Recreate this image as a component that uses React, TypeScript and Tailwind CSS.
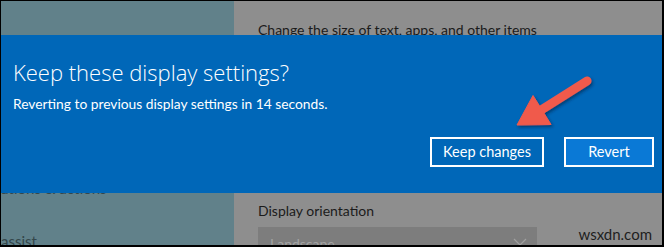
import React from "react";

const body = { fontFamily: 'Lato, "Open Sans", sans-serif' };
const heading = { fontFamily: '"Open Sans", "Noto Sans", sans-serif' };

function Arrow() {
  return (
    <svg className="pointer-events-none absolute left-0 top-0" width="664" height="247" viewBox="-1 -1 664 247">
      <defs>
        <filter id="sh" x="-20%" y="-20%" width="140%" height="140%">
          <feDropShadow dx="1.5" dy="2" stdDeviation="1.5" floodColor="#002040" floodOpacity="0.55" />
        </filter>
      </defs>
      <g filter="url(#sh)" fill="#f05a4c" stroke="#f05a4c">
        <line x1="585" y1="79" x2="536" y2="110" strokeWidth="9" strokeLinecap="round" />
        <polygon points="515,123 531,93.5 549,122.5" strokeWidth="1" strokeLinejoin="round" />
      </g>
    </svg>
  );
}

export default function App() {
  return (
    <div
      className="relative h-[247px] w-[664px] overflow-hidden border-t border-l border-r-2 border-b-2 border-black"
      style={body}
    >
      <div className="flex h-full">
        <aside className="flex w-[233px] flex-col bg-[#61818a] text-[15px] leading-5 text-[#34474b]">
          <div className="h-[6px] w-[217px] bg-[#4f666b]" />
          <div className="mt-[177px] whitespace-nowrap">ations &amp; actions</div>
          <div className="mt-[33px] whitespace-nowrap">assist</div>
        </aside>
        <main className="flex flex-1 flex-col bg-[#8e8e8e] pl-6 text-[14px] leading-5 text-[#1b1b1b]">
          <div className="mt-[19px] whitespace-nowrap">Change the size of text, apps, and other items</div>
          <div className="mt-[161px] whitespace-nowrap">Display orientation</div>
          <div className="mt-[6px] flex h-[20px] w-[279px] items-start justify-between bg-[#7d7d7d] pl-3 pr-[10px] text-[#a3a3a3]">
            <span className="pt-[7px] leading-5">Landscape</span>
            <svg width="14" height="8" viewBox="0 0 14 8" className="mt-[11px]">
              <path d="M1 1l6 6 6-6" fill="none" stroke="#a0a0a0" strokeWidth="1.2" />
            </svg>
          </div>
        </main>
      </div>

      <div className="absolute bottom-[1px] right-[10px] text-[15px] leading-5 text-[#1e1e1e]">wsxdn.com</div>

      <div className="absolute left-0 right-0 top-[34px] flex h-[158px] flex-col bg-[#0067b8] pl-3 text-white">
        <div className="mt-[21px] text-[22px] leading-8 font-light" style={heading}>
          Keep these display settings?
        </div>
        <div className="mt-[6px] text-[13.8px] leading-5">Reverting to previous display settings in 14 seconds.</div>
        <div className="mt-[23px] flex justify-end gap-[20px] pr-[8px]">
          <button className="h-[30px] w-[114px] border-2 border-white bg-[#0067b8] text-[14.5px] text-white">
            Keep changes
          </button>
          <button className="h-[30px] w-[90px] border-2 border-white bg-[#0a79d6] text-[14.5px] text-white">
            Revert
          </button>
        </div>
      </div>

      <Arrow />
    </div>
  );
}
